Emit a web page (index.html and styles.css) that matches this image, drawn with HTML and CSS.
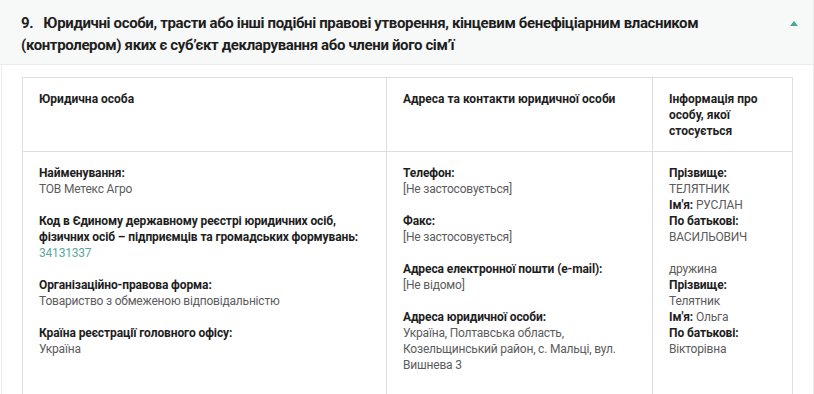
FILE: index.html
```html
<!DOCTYPE html>
<html lang="uk">
<head>
<meta charset="utf-8">
<link rel="stylesheet" href="styles.css">
</head>
<body>
<section class="panel">
  <header class="panel-head">
    <h2 class="title">9.&nbsp;&nbsp; Юридичні особи, трасти або інші подібні правові утворення, кінцевим бенефіціарним власником (контролером) яких є суб’єкт декларування або члени його сім’ї</h2>
    <svg class="toggle" width="8" height="5" viewBox="0 0 8 5"><path d="M4 0 L8 5 L0 5 Z" fill="#4fa592"/></svg>
  </header>
  <div class="panel-body">
    <table class="grid">
      <colgroup>
        <col class="c1"><col class="c2"><col class="c3">
      </colgroup>
      <thead>
        <tr>
          <th>Юридична особа</th>
          <th>Адреса та контакти юридичної особи</th>
          <th>Інформація про особу, якої стосується</th>
        </tr>
      </thead>
      <tbody>
        <tr>
          <td>
            <div class="field"><b>Найменування:</b><br>ТОВ Метекс Агро</div>
            <div class="field"><b>Код в Єдиному державному реєстрі юридичних осіб, фізичних осіб – підприємців та громадських формувань:</b><br><a class="link">34131337</a></div>
            <div class="field"><b>Організаційно-правова форма:</b><br>Товариство з обмеженою відповідальністю</div>
            <div class="field"><b>Країна реєстрації головного офісу:</b><br>Україна</div>
          </td>
          <td>
            <div class="field"><b>Телефон:</b><br>[Не застосовується]</div>
            <div class="field"><b>Факс:</b><br>[Не застосовується]</div>
            <div class="field"><b>Адреса електронної пошти (e-mail):</b><br>[Не відомо]</div>
            <div class="field"><b>Адреса юридичної особи:</b><br>Україна, Полтавська область, Козельщинський район, с. Мальці, вул. Вишнева 3</div>
          </td>
          <td>
            <div class="field"><b>Прізвище:</b><br>ТЕЛЯТНИК<br><b>Ім'я:</b> РУСЛАН<br><b>По батькові:</b><br>ВАСИЛЬОВИЧ</div>
            <div class="field">дружина<br><b>Прізвище:</b><br>Телятник<br><b>Ім'я:</b> Ольга<br><b>По батькові:</b><br>Вікторівна</div>
          </td>
        </tr>
      </tbody>
    </table>
  </div>
</section>
</body>
</html>
```
FILE: styles.css
```css
html, body {
  margin: 0;
  padding: 0;
  background: #fff;
}
body {
  font-family: Roboto, "Noto Sans", sans-serif;
  color: #222;
  width: 814px;
}
.panel {
  border-left: 1px solid #ececec;
  border-right: 1px solid #ececec;
  margin-left: 1px;
  width: 811px;
}
.panel-head {
  background: #f7f8f8;
  border-bottom: 1px solid #ececec;
  display: flex;
  align-items: flex-start;
  justify-content: space-between;
  padding: 12px 15px 8px 21px;
  margin-left: -2px;
}
.title {
  margin: 0;
  font-size: 15px;
  line-height: 22px;
  font-weight: 700;
  letter-spacing: -0.36px;
  color: #1e1e1e;
  width: 740px;
}
.toggle {
  margin-top: 9px;
}
.panel-body {
  padding: 12px 20px 0 20px;
}
.grid {
  border-collapse: collapse;
  width: 770px;
  table-layout: fixed;
  font-size: 12px;
  line-height: 16px;
}
.grid th, .grid td {
  border: 1px solid #dedede;
  text-align: left;
  vertical-align: top;
  padding: 13px 16px 12px 16px;
}
.grid th {
  font-weight: 700;
  color: #1e1e1e;
}
.grid td {
  color: #5c5c5c;
  padding-bottom: 16px;
  letter-spacing: -0.2px;
}
.c1 { width: 364px; }
.c2 { width: 266px; }
.c3 { width: 140px; }
.field {
  margin-bottom: 16px;
}
.field b {
  font-weight: 700;
  color: #1e1e1e;
  letter-spacing: -0.1px;
}
.link {
  color: #5aa89a;
}
```
